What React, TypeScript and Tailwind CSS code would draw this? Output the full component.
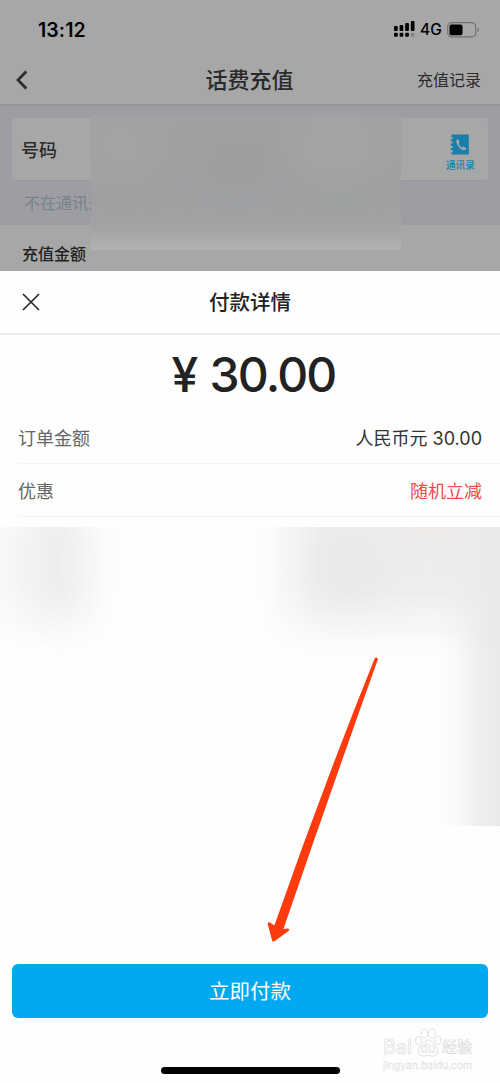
import React from 'react';

const orderRows = [
  { id: 1, label: '订单金额', value: '人民币元 30.00', valueClass: 'text-[#333333]' },
  { id: 2, label: '优惠', value: '随机立减', valueClass: 'text-[#ee4b4b]' },
];

const signalBars = [
  { x: 0, top: 5, low: '#000000' },
  { x: 5.6, top: 4, low: '#000000' },
  { x: 11.2, top: 2, low: '#000000' },
  { x: 16.8, top: 0, low: '#858585' },
];

const StatusBar: React.FC = () => (
  <div className="flex h-[60px] items-center justify-between pl-[38px] pr-5 text-black">
    <span className="pt-px text-[19.5px] font-semibold leading-none tracking-[0.1px]">13:12</span>
    <div className="flex items-center">
      <svg width="21" height="16" viewBox="0 0 21 16" className="mr-[5px] -mt-[2px]">
        {signalBars.map((bar) => (
          <g key={bar.x}>
            <rect x={bar.x} y={bar.top} width="3.7" height={10 - bar.top} rx="1" />
            <rect x={bar.x} y="11.8" width="3.7" height="4" rx="1" fill={bar.low} />
          </g>
        ))}
      </svg>
      <span className="mr-[6px] w-[21px] text-[15.5px] font-medium leading-none">4G</span>
      <svg width="33" height="16" viewBox="0 0 33 16">
        <rect x="0.7" y="0.7" width="28" height="14.2" rx="4" fill="none" stroke="#727272" strokeWidth="1.2" />
        <rect x="2.5" y="2.4" width="13" height="10.8" rx="2" />
        <path d="M30.5 5.6c2 .9 2 3.7 0 4.6z" fill="#727272" />
      </svg>
    </div>
  </div>
);

const NavBar: React.FC = () => (
  <div className="grid h-[46px] grid-cols-3 items-center border-b-2 border-[#939397] pb-[5px] text-[#2b2b2b]">
    <svg width="12" height="20" viewBox="0 0 12 20" fill="none" className="ml-4">
      <path d="M10.3 1.5 2 10l8.3 8.5" stroke="currentColor" strokeWidth="2.7" />
    </svg>
    <h1 className="-ml-px text-center text-[22px] font-medium leading-none">话费充值</h1>
    <span className="pr-[19px] text-right text-[16px] leading-none">充值记录</span>
  </div>
);

const ContactsIcon: React.FC = () => (
  <svg width="20" height="21" viewBox="0 0 20 21">
    <path
      d="M1.5.5h17.3v20H1.5v-2.2h1.2v-2H.8v-2.2h1.9v-2H.8V9.6h1.9V7.5H.8V5.2h1.9V3H1.5z"
      fill="#177fa9"
    />
    <path
      d="M7.4 5.3c-1.5.6-1.4 2.8-.2 5.2 1.5 3 4.6 5.6 6.7 5.7 1.4.1 2.5-1 2.2-1.6-.3-.7-2.3-2.1-3-1.8l-1 .8c-1.5-.7-2.7-2.2-3.3-3.8l.7-1.2c.2-.8-.9-3.5-2.1-3.3z"
      fill="#a7a7a7"
    />
  </svg>
);

const PhoneCard: React.FC = () => (
  <div className="relative h-[119px] bg-[#9e9da3] px-3 pt-3">
    <div className="flex h-[62px] items-center justify-between rounded-[4px] bg-[#a7a7a7] pl-[9px] pr-[13px] shadow-[0_1px_0_#98989b]">
      <span className="pt-[3px] text-[18px] font-medium leading-none text-[#2b2b2b]">号码</span>
      <div className="flex flex-col items-center gap-[6px] pt-[6px]">
        <ContactsIcon />
        <span className="text-[9.7px] font-medium leading-none text-[#177fa9]">通讯录</span>
      </div>
    </div>
    <p className="mt-[14px] whitespace-nowrap pl-3 text-[16px] leading-[18px] text-[#76838a]">不在通讯录</p>
    {/* Masked number */}
    <div className="absolute left-[91px] top-[9px] h-[135px] w-[310px] overflow-hidden bg-[linear-gradient(180deg,#a2a2a4_0%,#a1a1a2_35%,#9ea0a2_65%,#a4a4a6_85%,#b3b3b4_100%)]">
      <div className="absolute left-[105px] top-[15px] h-[50px] w-[75px] rounded-full bg-[#999a9b] opacity-50 blur-[20px]" />
      <div className="absolute left-[205px] top-2 h-[50px] w-[80px] rounded-full bg-[#a5a6a6] blur-[20px]" />
      <div className="absolute left-0 top-2 h-[50px] w-[60px] rounded-full bg-[#a5a5a6] blur-[20px]" />
    </div>
  </div>
);

const MaskedArea: React.FC = () => (
  <div className="relative mt-[10px] h-[299px] shrink-0 overflow-hidden bg-[#fefefe]">
    <div className="absolute -left-2 -top-[20px] h-[110px] w-[100px] bg-[#f6f6f6] blur-[20px]" />
    <div className="absolute left-[38px] -top-[20px] h-[112px] w-[38px] bg-[#e9e9e9] opacity-90 blur-[20px]" />
    <div className="absolute left-[290px] -top-[40px] h-[135px] w-[290px] bg-[#ededed] blur-[22px]" />
    <div className="absolute left-[318px] top-[10px] h-[65px] w-[60px] bg-[#e4e5e5] opacity-60 blur-[20px]" />
    <div className="absolute left-[400px] -top-[14px] h-[24px] w-[80px] bg-[#efe8e6] opacity-60 blur-[8px]" />
    <div className="absolute right-0 top-0 h-full w-[62px] bg-[linear-gradient(90deg,#eaeaea00_0%,#ebebeb40_30%,#ebebebcc_65%,#e9e9e9_100%)]" />
  </div>
);

const Arrow: React.FC = () => (
  <svg width="120" height="295" viewBox="260 650 120 295" className="absolute left-[260px] top-[650px]">
    <path
      d="M374.7 658.3Q376.5 656.4 378 659Q329.8 794 283.4 928.9L288 928.6Q290 929.4 288.5 931L274.5 941.3Q272.8 942 272.1 940.5L267.6 923.8Q268 921.6 270 922.6L274.4 925.6Q320.9 792 374.7 658.3Z"
      fill="#ff3b0d"
    />
  </svg>
);

const Watermark: React.FC = () => (
  <div className="absolute left-[383px] top-[1028px] w-[92px] text-white [-webkit-text-stroke:0.6px_#d9d9d9]">
    <div className="flex h-[29px] items-end">
      <span className="w-[31px] text-[19.5px] font-medium leading-[20px]">Bai</span>
      <svg width="28" height="29" viewBox="0 0 28 29" fill="#ffffff" stroke="#dddddd" strokeWidth="0.9">
        <ellipse cx="4.5" cy="12.5" rx="3" ry="4" transform="rotate(-12 4.5 12.5)" />
        <ellipse cx="10.5" cy="5.5" rx="3.2" ry="4.6" />
        <ellipse cx="18" cy="5.5" rx="3.2" ry="4.6" transform="rotate(8 18 5.5)" />
        <ellipse cx="24" cy="12.5" rx="3" ry="4" transform="rotate(12 24 12.5)" />
        <path d="M14 12c-3.4 0-4.7 3.6-7.4 6-3.2 2.8-3.1 9.6 2 10 2.2.2 3.3-.5 5.4-.5s3.2.7 5.4.5c5.1-.4 5.2-7.2 2-10C18.7 15.6 17.4 12 14 12z" />
        <text x="14" y="25" textAnchor="middle" fontSize="13" fontWeight="500" strokeWidth="0.5">
          du
        </text>
      </svg>
      <span className="whitespace-nowrap text-[15px] font-medium leading-[20px]">经验</span>
    </div>
    <p className="text-[10.3px] leading-[17px] text-[#f3f3f3] [-webkit-text-stroke:0.3px_#dcdcdc]">
      jingyan.baidu.com
    </p>
  </div>
);

const App: React.FC = () => {
  return (
    <main className="relative flex h-[1083px] w-[500px] flex-col overflow-hidden bg-[#a7a7a7] font-[Inter,'Noto_Sans_CJK_SC',sans-serif]">
      <StatusBar />
      <NavBar />
      <PhoneCard />
      <div className="flex h-[46px] items-center pl-[22px] pt-[11px]">
        <h2 className="text-[16px] font-medium leading-none text-[#222222]">充值金额</h2>
      </div>

      {/* Payment sheet */}
      <section className="relative flex flex-1 flex-col bg-[#fefefe]">
        <header className="grid h-[64px] grid-cols-3 items-center border-b-2 border-[#eeeeee] text-[#222222]">
          <svg width="18" height="18" viewBox="0 0 18 18" className="ml-[22px]">
            <path d="M1 1l16 16M17 1 1 17" stroke="currentColor" strokeWidth="1.6" />
          </svg>
          <h2 className="pt-[3px] text-center text-[20.5px] font-medium leading-none">付款详情</h2>
        </header>

        <div className="flex h-[76px] items-center justify-center gap-[10px] pl-[7px] pt-[3px] text-[48px] font-medium leading-none text-[#222222]">
          <span className="w-[28px]">¥</span>
          <span className="tracking-[-1.8px]">30.00</span>
        </div>

        {orderRows.map((row) => (
          <div
            key={row.id}
            className="ml-[18px] flex h-[53px] items-center justify-between border-b border-[#f3f3f3] pr-[18px] pt-[3px] text-[18px] leading-none"
          >
            <span className="text-[#666666]">{row.label}</span>
            <span className={row.valueClass}>{row.value}</span>
          </div>
        ))}

        <MaskedArea />

        <button className="mx-3 mt-auto mb-[49px] h-[54px] rounded-[6px] bg-[#03a9f0] pt-[3px] text-[20.5px] leading-none text-white">
          立即付款
        </button>
        <div className="mx-auto mb-[9px] h-[7px] w-[179px] shrink-0 rounded-full bg-black" />
      </section>

      <Arrow />
      <Watermark />
    </main>
  );
};

export default App;
